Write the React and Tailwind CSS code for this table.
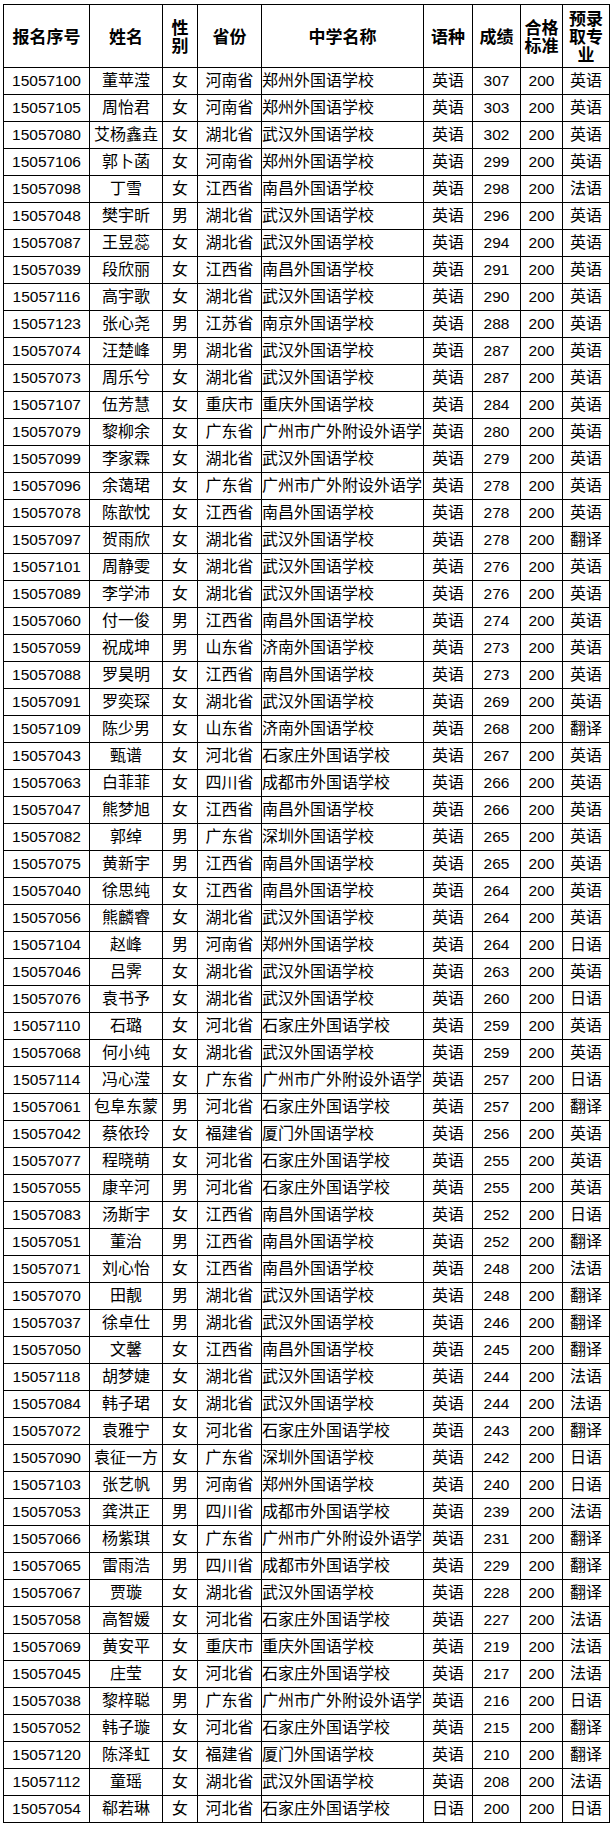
import React from "react";

const data = `15057100 董苹滢 女 河南省 郑州外国语学校 英语 307 200 英语
15057105 周怡君 女 河南省 郑州外国语学校 英语 303 200 英语
15057080 艾杨鑫垚 女 湖北省 武汉外国语学校 英语 302 200 英语
15057106 郭卜菡 女 河南省 郑州外国语学校 英语 299 200 英语
15057098 丁雪 女 江西省 南昌外国语学校 英语 298 200 法语
15057048 樊宇昕 男 湖北省 武汉外国语学校 英语 296 200 英语
15057087 王昱蕊 女 湖北省 武汉外国语学校 英语 294 200 英语
15057039 段欣丽 女 江西省 南昌外国语学校 英语 291 200 英语
15057116 高宇歌 女 湖北省 武汉外国语学校 英语 290 200 英语
15057123 张心尧 男 江苏省 南京外国语学校 英语 288 200 英语
15057074 汪楚峰 男 湖北省 武汉外国语学校 英语 287 200 英语
15057073 周乐兮 女 湖北省 武汉外国语学校 英语 287 200 英语
15057107 伍芳慧 女 重庆市 重庆外国语学校 英语 284 200 英语
15057079 黎柳余 女 广东省 广州市广外附设外语学 英语 280 200 英语
15057099 李家霖 女 湖北省 武汉外国语学校 英语 279 200 英语
15057096 余蔼珺 女 广东省 广州市广外附设外语学 英语 278 200 英语
15057078 陈歆忱 女 江西省 南昌外国语学校 英语 278 200 英语
15057097 贺雨欣 女 湖北省 武汉外国语学校 英语 278 200 翻译
15057101 周静雯 女 湖北省 武汉外国语学校 英语 276 200 英语
15057089 李学沛 女 湖北省 武汉外国语学校 英语 276 200 英语
15057060 付一俊 男 江西省 南昌外国语学校 英语 274 200 英语
15057059 祝成坤 男 山东省 济南外国语学校 英语 273 200 英语
15057088 罗昊明 女 江西省 南昌外国语学校 英语 273 200 英语
15057091 罗奕琛 女 湖北省 武汉外国语学校 英语 269 200 英语
15057109 陈少男 女 山东省 济南外国语学校 英语 268 200 翻译
15057043 甄谱 女 河北省 石家庄外国语学校 英语 267 200 英语
15057063 白菲菲 女 四川省 成都市外国语学校 英语 266 200 英语
15057047 熊梦旭 女 江西省 南昌外国语学校 英语 266 200 英语
15057082 郭绰 男 广东省 深圳外国语学校 英语 265 200 英语
15057075 黄新宇 男 江西省 南昌外国语学校 英语 265 200 英语
15057040 徐思纯 女 江西省 南昌外国语学校 英语 264 200 英语
15057056 熊麟睿 女 湖北省 武汉外国语学校 英语 264 200 英语
15057104 赵峰 男 河南省 郑州外国语学校 英语 264 200 日语
15057046 吕霁 女 湖北省 武汉外国语学校 英语 263 200 英语
15057076 袁书予 女 湖北省 武汉外国语学校 英语 260 200 日语
15057110 石璐 女 河北省 石家庄外国语学校 英语 259 200 英语
15057068 何小纯 女 湖北省 武汉外国语学校 英语 259 200 英语
15057114 冯心滢 女 广东省 广州市广外附设外语学 英语 257 200 日语
15057061 包阜东蒙 男 河北省 石家庄外国语学校 英语 257 200 翻译
15057042 蔡依玲 女 福建省 厦门外国语学校 英语 256 200 英语
15057077 程晓萌 女 河北省 石家庄外国语学校 英语 255 200 英语
15057055 康辛河 男 河北省 石家庄外国语学校 英语 255 200 英语
15057083 汤斯宇 女 江西省 南昌外国语学校 英语 252 200 日语
15057051 董治 男 江西省 南昌外国语学校 英语 252 200 翻译
15057071 刘心怡 女 江西省 南昌外国语学校 英语 248 200 法语
15057070 田靓 男 湖北省 武汉外国语学校 英语 248 200 翻译
15057037 徐卓仕 男 湖北省 武汉外国语学校 英语 246 200 翻译
15057050 文馨 女 江西省 南昌外国语学校 英语 245 200 翻译
15057118 胡梦婕 女 湖北省 武汉外国语学校 英语 244 200 法语
15057084 韩子珺 女 湖北省 武汉外国语学校 英语 244 200 法语
15057072 袁雅宁 女 河北省 石家庄外国语学校 英语 243 200 翻译
15057090 袁征一方 女 广东省 深圳外国语学校 英语 242 200 日语
15057103 张艺帆 男 河南省 郑州外国语学校 英语 240 200 日语
15057053 龚洪正 男 四川省 成都市外国语学校 英语 239 200 法语
15057066 杨紫琪 女 广东省 广州市广外附设外语学 英语 231 200 翻译
15057065 雷雨浩 男 四川省 成都市外国语学校 英语 229 200 翻译
15057067 贾璇 女 湖北省 武汉外国语学校 英语 228 200 翻译
15057058 高智媛 女 河北省 石家庄外国语学校 英语 227 200 法语
15057069 黄安平 女 重庆市 重庆外国语学校 英语 219 200 法语
15057045 庄莹 女 河北省 石家庄外国语学校 英语 217 200 法语
15057038 黎梓聪 男 广东省 广州市广外附设外语学 英语 216 200 日语
15057052 韩子璇 女 河北省 石家庄外国语学校 英语 215 200 翻译
15057120 陈泽虹 女 福建省 厦门外国语学校 英语 210 200 翻译
15057112 童瑶 女 湖北省 武汉外国语学校 英语 208 200 法语
15057054 郗若琳 女 河北省 石家庄外国语学校 日语 200 200 日语`
  .split("\n")
  .map((l) => l.trim().split(" "));

const headers = [
  ["报名序号"],
  ["姓名"],
  ["性", "别"],
  ["省份"],
  ["中学名称"],
  ["语种"],
  ["成绩"],
  ["合格", "标准"],
  ["预录", "取专", "业"],
];

const numCols = new Set([0, 6, 7]);

export default function App() {
  return (
    <div className="bg-white min-h-[1825px] pt-[4px] pl-[3px] text-black font-['Liberation_Sans','Noto_Sans_CJK_SC',sans-serif]">
      <div className="grid w-[607px] grid-cols-[86px_73px_35px_64px_162px_49px_48px_42px_47px] border-l border-t border-black">
        {headers.map((lines, i) => (
          <div
            key={"h" + i}
            className="h-[63px] border-r border-b border-black flex flex-col items-center justify-center text-center font-bold text-[17px] leading-[18px] font-['Noto_Sans_CJK_SC',sans-serif]"
          >
            {lines.map((ln, j) => (
              <span key={j} className="block whitespace-nowrap">
                {ln}
              </span>
            ))}
          </div>
        ))}
        {data.map((row, r) =>
          row.map((cell, c) => (
            <div
              key={r + "-" + c}
              className={
                "h-[27px] border-r border-b border-black flex items-center overflow-hidden whitespace-nowrap " +
                (c === 4 ? "justify-start pl-0 " : "justify-center ") +
                (numCols.has(c) ? "text-[15.5px]" : "text-[16px]")
              }
            >
              {cell}
            </div>
          ))
        )}
      </div>
    </div>
  );
}
